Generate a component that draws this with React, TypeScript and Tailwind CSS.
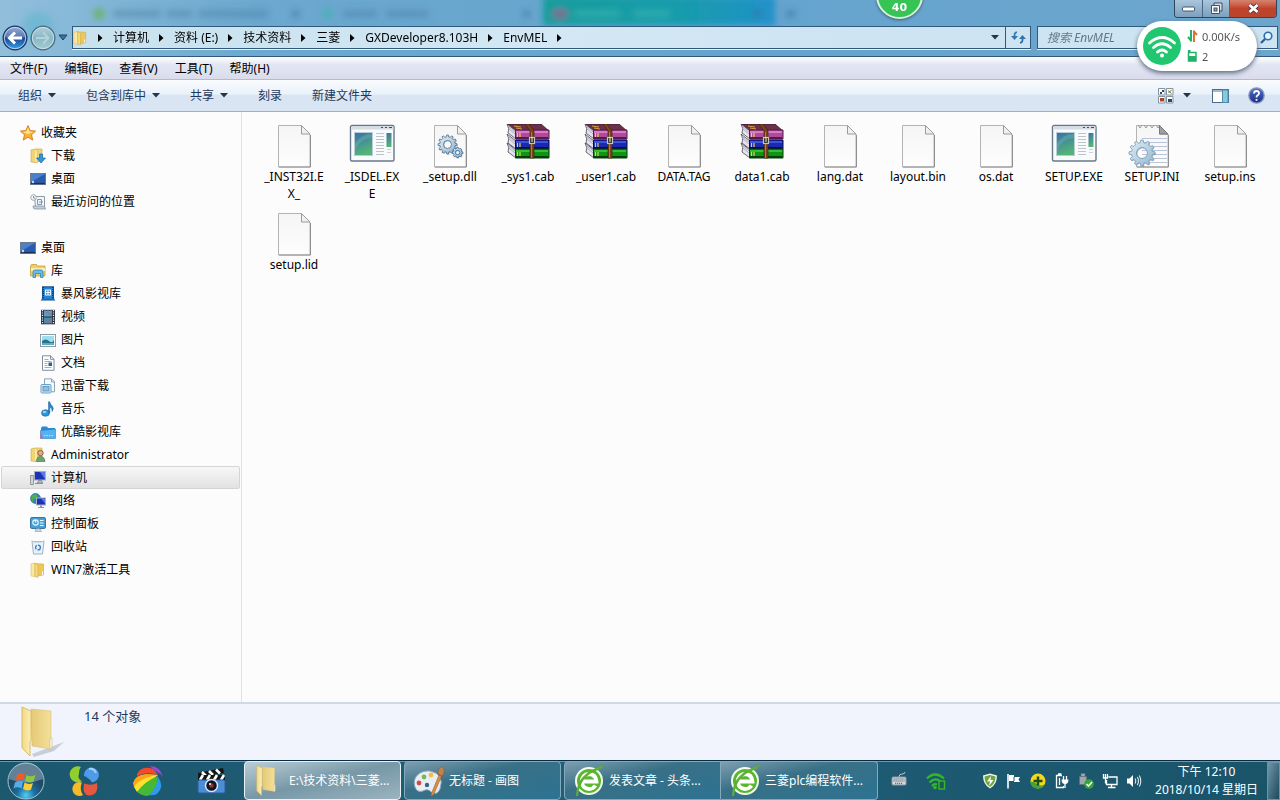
import React from 'react';

type IconProps = { className?: string };

/* ---------- large file icons (48 x 44) ---------- */

const PageShape = () => (
  <>
    <path d="M8.5 1.5h23l8.5 8.5v33H8.5z" fill="url(#pageFill)" stroke="#b4b4b4" />
    <path d="M31.5 1.5v8.5H40z" fill="#f0f0f0" stroke="#9a9a9a" />
    <path d="M9 43h31.5V11" fill="none" stroke="#8f8f8f" />
  </>
);

// Toothed outline plus the centre hole, filled with the even-odd rule
const gearPath = (cx: number, cy: number, r: number, teeth: number) => {
  const points: string[] = [];
  for (let i = 0; i < teeth; i++) {
    [[-0.3, 0.8], [-0.17, 1], [0.17, 1], [0.3, 0.8]].forEach(([offset, k]) => {
      const a = ((i + offset) / teeth) * Math.PI * 2;
      points.push(`${(cx + Math.cos(a) * r * k).toFixed(2)} ${(cy + Math.sin(a) * r * k).toFixed(2)}`);
    });
  }
  const h = r * 0.42;
  return `M${points.join('L')}ZM${cx - h} ${cy}a${h} ${h} 0 1 0 ${h * 2} 0a${h} ${h} 0 1 0 ${-h * 2} 0Z`;
};

const Gear = ({ cx, cy, r, teeth, stroke = '#5d7b95' }: { cx: number; cy: number; r: number; teeth: number; stroke?: string }) => (
  <>
    <path d={gearPath(cx + 0.8, cy + 0.8, r, teeth)} fillRule="evenodd" fill="#63717f" opacity=".5" />
    <path d={gearPath(cx, cy, r, teeth)} fillRule="evenodd" fill="url(#gearFill)" stroke={stroke} strokeWidth=".9" />
  </>
);

const BlankFile = () => (
  <svg width="48" height="44" viewBox="0 0 48 44"><PageShape /></svg>
);

const DllFile = () => (
  <svg width="48" height="44" viewBox="0 0 48 44">
    <PageShape />
    <Gear cx={21.5} cy={20.5} r={9.5} teeth={12} />
    <Gear cx={31.5} cy={28.5} r={5.2} teeth={8} stroke="#3f6c93" />
  </svg>
);

const IniFile = () => (
  <svg width="48" height="44" viewBox="0 0 48 44">
    <PageShape />
    <path d="M14 14.5h25M14 18.5h25M14 22.5h25M14 26.5h25M14 30.5h25M14 34.5h25M14 38.5h25" stroke="#b9c4d8" />
    <path d="M10 1l2 3 2-3M16 1l2 3 2-3M22 1l2 3 2-3M28 1l2 3 2-3" fill="none" stroke="#9a9a9a" />
    <path d="M31.5 1.5v8.5H40z" fill="#9aa0a8" stroke="#777" />
    <Gear cx={14} cy={29} r={13} teeth={12} stroke="#7fa0bb" />
  </svg>
);

const ExeFile = () => (
  <svg width="48" height="44" viewBox="0 0 48 44">
    <rect x="2.5" y="1.5" width="43.5" height="35.5" rx="1.5" fill="#f8fafc" stroke="#66788a" strokeWidth="1.4" />
    <path d="M3.5 2.5h42v3h-42z" fill="#d4dce5" />
    <path d="M33 3.5h2M37 3.5h2M41 3.5h3" stroke="#38506a" />
    <rect x="6.5" y="8.5" width="18" height="23" fill="url(#exeFill)" stroke="#b9ccd7" />
    <path d="M7 19q8-10 17-9v4q-11 0-17 12z" fill="#72b9c5" opacity=".35" />
    <path d="M28 9.5h8M28 12.5h8M28 15.5h8M28 18.5h8M28 21.5h8M28 24.5h8M28 27.5h8M28 30.5h8" stroke="#bcc3c9" />
    <rect x="38.5" y="9" width="5" height="14" fill="url(#exeFill)" />
    <path d="M39 25.5h4M39 28.5h4" stroke="#cdd2d6" />
  </svg>
);

const books = [
  { y: 6, spine: '#b04a9d', light: '#e48fd3', dark: '#4e1c46' },
  { y: 16, spine: '#1a28b4', light: '#4f62ea', dark: '#080c4c' },
  { y: 25, spine: '#0f9418', light: '#3fce38', dark: '#053f09' },
];

const RarFile = () => (
  <svg width="48" height="44" viewBox="0 0 48 44">
    <path d="M3 0h34l8 7H11z" fill="#6c2f4b" stroke="#3c1428" strokeWidth=".8" />
    {books.map((b) => (
      <g key={b.y}>
        <path d={`M3 ${b.y - 6}l9 7v8l-8-6q2-4-1-9z`} fill="#e4e4ee" stroke="#4a4552" strokeWidth=".8" />
        <path d={`M5 ${b.y - 3}l6 5M5 ${b.y - 1}l6 5`} stroke="#9a9aac" strokeWidth=".7" />
        <path d={`M11.5 ${b.y}H45v9H11.5z`} fill={b.spine} stroke={b.dark} />
        <path d={`M12 ${b.y + 2}h32`} stroke={b.light} strokeWidth="1.5" />
        <path d={`M12 ${b.y + 8}h32`} stroke={b.dark} strokeWidth="2" />
        <path d={`M13.5 ${b.y + 3}v4M16 ${b.y + 3}v4`} stroke="#e9d34b" strokeWidth="1.2" />
      </g>
    ))}
    <path d="M21 0h4l5 7v27h-4V7z" fill="#7a451c" stroke="#3f200a" strokeWidth=".7" />
    <path d="M27.5 8v26" stroke="#b97a3c" />
    <path d="M10 2l7 1M12 4l6 1" stroke="#d6a33e" />
    <rect x="25.5" y="13.5" width="5" height="6" fill="#2c2c22" stroke="#c4c4bc" strokeWidth="1.2" />
    <path d="M28 13v5" stroke="#f4f4e0" />
  </svg>
);

/* ---------- small icons ---------- */

const FolderIcon = ({ className = 'h-4 w-4' }: IconProps) => (
  <svg className={className} viewBox="0 0 16 16">
    <path d="M5 1.5l8.5.5v11l-6 1z" fill="#ecc75b" stroke="#c79e3b" strokeWidth=".5" />
    <path d="M1 2l4-1v13.500L1 14z" fill="#f9e9a2" stroke="#d2ae4c" strokeWidth=".5" />
    <path d="M5 1l3 2v12.500l-3-1z" fill="#f4d979" stroke="#cba746" strokeWidth=".5" />
    <path d="M12.500 9.500v3.500" stroke="#fff" />
  </svg>
);

const StarIcon = () => (
  <svg className="h-4 w-4" viewBox="0 0 16 16">
    <path d="M8 .6l2.200 5 5.400.5-4.100 3.600 1.200 5.400L8 12.200l-4.700 2.900 1.200-5.400L.4 6.100l5.400-.5z" fill="#fbb034" stroke="#d1791a" strokeWidth=".9" />
    <path d="M8 2.500l1.500 4 4 .4-5.500 2-5.500-2 4-.4z" fill="#ffe28c" />
  </svg>
);

const DownloadIcon = () => (
  <svg className="h-4 w-4" viewBox="0 0 16 16">
    <path d="M1 2l4-1h7v11l-6 2.500L1 14z" fill="#f1d575" stroke="#c9a442" strokeWidth=".6" />
    <path d="M5 1l2.500 2v12L5 14" fill="#f9e7a0" stroke="#cfae50" strokeWidth=".5" />
    <path d="M9.500 6h3v4H15.500l-4.500 5-4.500-5h3z" fill="#3297dd" stroke="#1968ab" strokeWidth=".7" />
  </svg>
);

const DesktopIcon = () => (
  <svg className="h-4 w-4" viewBox="0 0 16 16">
    <rect x=".5" y="2.500" width="15" height="11" fill="#2a5cae" stroke="#6f7c8d" />
    <path d="M1 3h14L1 11z" fill="#4c80cc" />
    <path d="M1 12.500h14" stroke="#1d3155" strokeWidth="1.300" />
    <circle cx="3" cy="11" r="1.200" fill="#bfdcf2" />
  </svg>
);

const RecentIcon = () => (
  <svg className="h-4 w-4" viewBox="0 0 16 16">
    <path d="M4.500 2.500h10v11h-9z" fill="#f3f6f9" stroke="#8d9ca8" />
    <path d="M3 12h10q2 0 2.500 3H5q-2 0-2-3z" fill="#c6ced5" stroke="#8895a0" strokeWidth=".8" />
    <path d="M7.500 5.500h4v5h-4zM9 8h4" fill="none" stroke="#7e98ad" />
    <circle cx="3.500" cy="3.500" r="2.800" fill="#f6fafc" stroke="#95a6b4" />
    <path d="M3.500 2v2h1.500" fill="none" stroke="#566" strokeWidth=".7" />
  </svg>
);

const LibraryIcon = () => (
  <svg className="h-4 w-4" viewBox="0 0 16 16">
    <path d="M.5 3l1-1.500h5l1 1.500h7.500v10H.5z" fill="#efce68" stroke="#c49f3d" strokeWidth=".8" />
    <path d="M1 5h14v3H1z" fill="#fbeeb4" />
    <path d="M3 14.500V9q0-2 2-2h6q2 0 2 2v5.500h-2.500V10.500h-5v4z" fill="#6cbbe6" stroke="#3384b5" strokeWidth=".8" />
  </svg>
);

const FilmLibraryIcon = () => (
  <svg className="h-4 w-4" viewBox="0 0 16 16">
    <path d="M1 14.500l1.500-3h11l1.500 3z" fill="#9cc4e6" stroke="#4d7fa8" strokeWidth=".6" />
    <rect x="2.500" y=".8" width="11" height="12.500" fill="#2584d8" stroke="#1b4f86" />
    <path d="M3.500 1v12M12.500 1v12" stroke="#10365e" strokeDasharray="1 1" />
    <path d="M5.500 4h5v5h-5zM8 4v5M5.500 6.500h5" fill="none" stroke="#e3f5ff" strokeWidth="1.200" />
  </svg>
);

const VideoIcon = () => (
  <svg className="h-4 w-4" viewBox="0 0 16 16">
    <rect x="1" y=".8" width="14" height="14.500" fill="#25303a" />
    <path d="M2.500 1v14M13.500 1v14" stroke="#e9eef2" strokeWidth="1.300" strokeDasharray="1.200 1.200" />
    <rect x="4" y="1.500" width="8" height="6" fill="#5d9fc1" />
    <rect x="4" y="8.500" width="8" height="6" fill="#4c8aab" />
    <path d="M4 3l8 4v-3zM4 14l8-4v3z" fill="#b25f88" opacity=".7" />
  </svg>
);

const PictureIcon = () => (
  <svg className="h-4 w-4" viewBox="0 0 16 16">
    <rect x=".5" y="2.500" width="15" height="12" fill="#fff" stroke="#8f9ca8" />
    <rect x="2" y="4" width="12" height="9" fill="#9fdcec" />
    <path d="M2 9q4-3 7 0t5-1v5H2z" fill="#28748c" />
    <path d="M2 11h12v2H2z" fill="#56b1bd" />
  </svg>
);

const DocIcon = () => (
  <svg className="h-4 w-4" viewBox="0 0 16 16">
    <path d="M2.500.8h8l3.500 3.500v11H2.500z" fill="#fff" stroke="#7f8e9c" />
    <path d="M10.500.8v3.500H14" fill="none" stroke="#7f8e9c" />
    <path d="M4.500 4.500h4M4.500 6.500h7M4.500 8.500h3M4.500 10.500h3M4.500 12.500h7" stroke="#8ea6bc" strokeWidth=".9" />
    <rect x="8.500" y="7.500" width="3.500" height="3.500" fill="#2c5f92" />
  </svg>
);

const ThunderIcon = () => (
  <svg className="h-4 w-4" viewBox="0 0 16 16">
    <path d="M4.500.8h7l3 3v10h-10z" fill="#f5fafe" stroke="#89a2b6" />
    <path d="M11.500 1v3h3" fill="none" stroke="#89a2b6" />
    <rect x="1" y="6.500" width="10" height="8.500" rx="1" fill="#d2e8f7" stroke="#6e9fc4" />
    <rect x="3" y="8.500" width="6" height="4.500" fill="#8ec0e2" stroke="#4e88b6" strokeWidth=".7" />
  </svg>
);

const MusicIcon = () => (
  <svg className="h-4 w-4" viewBox="0 0 16 16">
    <ellipse cx="5.500" cy="12" rx="4" ry="3.300" fill="#2b95d9" stroke="#1769a8" strokeWidth=".6" />
    <path d="M8.500 12V.8h1.300q.4 2.700 2.600 4.500 2 2.500-.4 5.200.6-3.500-2.200-4.300V12z" fill="#2d83c1" stroke="#1c669f" strokeWidth=".5" />
    <ellipse cx="4.500" cy="11" rx="1.800" ry="1" fill="#a5dcf7" />
  </svg>
);

const BlueFolderIcon = () => (
  <svg className="h-4 w-4" viewBox="0 0 16 16">
    <path d="M1 4l1-1.500h5L8 4h7v10H1z" fill="#2d8ad2" />
    <path d="M.5 6.500L15.500 5v9.500H.5z" fill="#55b2ef" stroke="#2a7fc2" strokeWidth=".6" />
    <path d="M4 11.500h10" stroke="#b9e1fa" strokeDasharray="1.500 1" />
    <path d="M.5 8v6.500h2.500z" fill="#e35a86" />
  </svg>
);

const UserFolderIcon = () => (
  <svg className="h-4 w-4" viewBox="0 0 16 16">
    <path d="M1 2l4-1h7v12l-6 1.500L1 14z" fill="#f1d575" stroke="#c9a442" strokeWidth=".6" />
    <path d="M5 1l2.500 2v12L5 14" fill="#f9e7a0" stroke="#cfae50" strokeWidth=".5" />
    <circle cx="10.500" cy="6" r="2.700" fill="#e3ab82" stroke="#7b4b2c" strokeWidth=".8" />
    <path d="M6.500 14.500q0-5 4-5t4.500 5z" fill="#69a36e" stroke="#42724a" strokeWidth=".6" />
  </svg>
);

const ComputerIcon = () => (
  <svg className="h-4 w-4" viewBox="0 0 16 16">
    <rect x=".7" y="5.500" width="2.600" height="9" fill="#d7dce2" stroke="#75808c" strokeWidth=".8" />
    <rect x="4.500" y="1.500" width="11" height="8.500" fill="#1b33b4" stroke="#a7b0bf" />
    <path d="M10 2h5v7z" fill="#587ae6" />
    <path d="M8.500 10.500h3l1 2.500h-5zM5 13.500h8" fill="#b6bfca" stroke="#87919e" />
  </svg>
);

const NetworkIcon = () => (
  <svg className="h-4 w-4" viewBox="0 0 16 16">
    <circle cx="5.500" cy="5.500" r="5" fill="#2a86c4" stroke="#1f5f8e" strokeWidth=".6" />
    <path d="M2 2.500q4-2.500 5 0t-2 3-2 4q-3-3-1-7z" fill="#4fb04f" />
    <rect x="6.500" y="5" width="9" height="7" fill="#1b33b4" stroke="#a7b0bf" />
    <path d="M11 5.500h4v5z" fill="#587ae6" />
    <path d="M10 12.500h2v1.500h2v1H8v-1h2z" fill="#8c97a6" />
  </svg>
);

const ControlPanelIcon = () => (
  <svg className="h-4 w-4" viewBox="0 0 16 16">
    <rect x=".6" y="1.600" width="14.800" height="10.800" rx="1" fill="#4aa3d7" stroke="#2c6d9d" />
    <circle cx="5.500" cy="6.500" r="2.700" fill="none" stroke="#e5f5ff" strokeWidth="1.200" />
    <path d="M5.500 6.500v-2.500M10 4.500h3.500M10 7h3.500M10 9.500h3.500" stroke="#eaf8ff" strokeWidth="1.200" />
    <path d="M5 15.500q0-3 3-3t3.500 3z" fill="#cfd8e0" stroke="#8f9ba6" strokeWidth=".6" />
  </svg>
);

const RecycleIcon = () => (
  <svg className="h-4 w-4" viewBox="0 0 16 16">
    <path d="M2 2.500h12l-1.500 12.500h-9z" fill="#e9f1f8" stroke="#9fb1c1" />
    <path d="M1.500 1.500L4 3h8l2.500-1.500" fill="none" stroke="#bccad6" />
    <circle cx="8" cy="8.500" r="2.400" fill="none" stroke="#3b7fca" strokeWidth="1.400" strokeDasharray="4 1" />
  </svg>
);

const Caret = () => (
  <svg width="8" height="5" viewBox="0 0 8 5"><path d="M0 0h8L4 4.500z" fill="#22344e" /></svg>
);

/* ---------- navigation ---------- */

type NavItem = { label: string; icon: React.ReactNode; indent: string; active?: boolean };

const favorites: NavItem[] = [
  { label: '收藏夹', icon: <StarIcon />, indent: 'pl-[18px]' },
  { label: '下载', icon: <DownloadIcon />, indent: 'pl-[28px]' },
  { label: '桌面', icon: <DesktopIcon />, indent: 'pl-[28px]' },
  { label: '最近访问的位置', icon: <RecentIcon />, indent: 'pl-[28px]' },
];

const places: NavItem[] = [
  { label: '桌面', icon: <DesktopIcon />, indent: 'pl-[18px]' },
  { label: '库', icon: <LibraryIcon />, indent: 'pl-[28px]' },
  { label: '暴风影视库', icon: <FilmLibraryIcon />, indent: 'pl-[38px]' },
  { label: '视频', icon: <VideoIcon />, indent: 'pl-[38px]' },
  { label: '图片', icon: <PictureIcon />, indent: 'pl-[38px]' },
  { label: '文档', icon: <DocIcon />, indent: 'pl-[38px]' },
  { label: '迅雷下载', icon: <ThunderIcon />, indent: 'pl-[38px]' },
  { label: '音乐', icon: <MusicIcon />, indent: 'pl-[38px]' },
  { label: '优酷影视库', icon: <BlueFolderIcon />, indent: 'pl-[38px]' },
  { label: 'Administrator', icon: <UserFolderIcon />, indent: 'pl-[28px]' },
  { label: '计算机', icon: <ComputerIcon />, indent: 'pl-[28px]', active: true },
  { label: '网络', icon: <NetworkIcon />, indent: 'pl-[28px]' },
  { label: '控制面板', icon: <ControlPanelIcon />, indent: 'pl-[28px]' },
  { label: '回收站', icon: <RecycleIcon />, indent: 'pl-[28px]' },
  { label: 'WIN7激活工具', icon: <FolderIcon />, indent: 'pl-[28px]' },
];

const NavList = ({ items }: { items: NavItem[] }) => (
  <ul>
    {items.map((item) => (
      <li key={item.label}>
        <button
          className={`flex h-[23px] w-full items-center gap-[5px] rounded-xs border ${item.indent} ${
            item.active ? 'border-[#d5d5d5] bg-linear-to-b from-[#f7f7f7] to-[#e2e2e2]' : 'border-transparent'
          }`}
        >
          {item.icon}
          <span>{item.label}</span>
        </button>
      </li>
    ))}
  </ul>
);

const files = [
  { name: '_INST32I.E\nX_', icon: <BlankFile /> },
  { name: '_ISDEL.EX\nE', icon: <ExeFile /> },
  { name: '_setup.dll', icon: <DllFile /> },
  { name: '_sys1.cab', icon: <RarFile /> },
  { name: '_user1.cab', icon: <RarFile /> },
  { name: 'DATA.TAG', icon: <BlankFile /> },
  { name: 'data1.cab', icon: <RarFile /> },
  { name: 'lang.dat', icon: <BlankFile /> },
  { name: 'layout.bin', icon: <BlankFile /> },
  { name: 'os.dat', icon: <BlankFile /> },
  { name: 'SETUP.EXE', icon: <ExeFile /> },
  { name: 'SETUP.INI', icon: <IniFile /> },
  { name: 'setup.ins', icon: <BlankFile /> },
  { name: 'setup.lid', icon: <BlankFile /> },
];

/* ---------- window chrome ---------- */

const crumbs = ['计算机', '资料 (E:)', '技术资料', '三菱', 'GXDeveloper8.103H', 'EnvMEL'];

const CrumbArrow = () => (
  <span className="flex w-[25px] justify-center">
    <svg width="5" height="8" viewBox="0 0 5 8"><path d="M0 0l4.500 4L0 8z" fill="#000" /></svg>
  </span>
);

// Browser tabs showing through the glass frame
const GlassBackdrop = () => (
  <svg className="absolute inset-0 h-full w-full" preserveAspectRatio="none" viewBox="0 0 1280 57">
    <rect width="1280" height="57" fill="url(#glass)" />
    <g filter="url(#soft)">
      <circle cx="38" cy="28" r="16" fill="#62b6cf" opacity=".6" />
      <rect x="543" y="-4" width="232" height="30" fill="url(#tab)" />
      <ellipse cx="99" cy="14" rx="6" ry="6" fill="#6fb077" />
      <ellipse cx="328" cy="14" rx="6" ry="6" fill="#4faebb" />
      <ellipse cx="560" cy="14" rx="8" ry="5" fill="#7d6b91" />
      <path d="M113 14h48M166 14h26M198 14h70" stroke="#44799f" strokeWidth="8" opacity=".4" />
      <path d="M343 14h34M386 14h42" stroke="#44799f" strokeWidth="8" opacity=".4" />
      <path d="M574 14h46M634 14h36" stroke="#4cc0ba" strokeWidth="8" opacity=".4" />
      <path d="M292 14h7M523 14h7M754 14h7M786 14h9" stroke="#336890" strokeWidth="7" opacity=".5" />
    </g>
  </svg>
);

const TitleBar = () => (
  <header className="relative h-[57px] border-b border-[#31597b]">
    <GlassBackdrop />
    <div className="relative flex h-[26px] items-start justify-end pr-[3px]">
      <div className="flex h-[18px] overflow-hidden rounded-b border border-t-0 border-[#31445c]">
        <button aria-label="最小化" className="flex w-[28px] items-center justify-center border-r border-[#4b6680] bg-linear-to-b from-[#a9c6dc] to-[#7ba0be]">
          <svg width="13" height="6" viewBox="0 0 13 6"><rect x=".5" y="1" width="12" height="4" rx="1" fill="#fff" stroke="#46566a" /></svg>
        </button>
        <button aria-label="还原" className="flex w-[27px] items-center justify-center border-r border-[#4b6680] bg-linear-to-b from-[#a9c6dc] to-[#7ba0be]">
          <svg width="13" height="13" viewBox="0 0 13 13">
            <path d="M4 1h8v8h-8z" fill="#d5e0ea" stroke="#404d63" />
            <path d="M1.500 3.500h8v8h-8z" fill="#fff" stroke="#404d63" />
            <rect x="4" y="6" width="3" height="3" fill="#8fa9bf" stroke="#404d63" />
          </svg>
        </button>
        <button aria-label="关闭" className="flex w-[46px] items-center justify-center bg-linear-to-b from-[#d4836f] via-[#c2422a] to-[#b8452c]">
          <svg width="13" height="11" viewBox="0 0 13 11">
            <path d="M2.500 2l8 7M10.500 2l-8 7" stroke="#5c3540" strokeWidth="4.500" />
            <path d="M2.500 2l8 7M10.500 2l-8 7" stroke="#fff" strokeWidth="2.800" />
          </svg>
        </button>
      </div>
    </div>
    <div className="relative flex h-[23px] items-center pr-[2px] pl-[2px]">
      <button aria-label="后退">
        <svg width="26" height="26" viewBox="0 0 26 26">
          <circle cx="13" cy="13" r="11.800" fill="url(#back)" stroke="#1e3a6c" strokeWidth="1.400" />
          <circle cx="13" cy="13" r="10.700" fill="none" stroke="#d7e8f8" strokeWidth=".8" />
          <path d="M2.500 12A10.500 10 0 0 1 23.500 12Q13 15 2.500 12z" fill="#fff" opacity=".25" />
          <path d="M20 13H8.500M13 7.500L7.500 13l5.500 5.500" fill="none" stroke="#fff" strokeWidth="3" />
        </svg>
      </button>
      <button aria-label="前进" className="ml-0.5">
        <svg width="26" height="26" viewBox="0 0 26 26">
          <circle cx="13" cy="13" r="11.800" fill="url(#fwd)" stroke="#4c7086" strokeWidth="1.400" />
          <circle cx="13" cy="13" r="10.700" fill="none" stroke="#d5e9ee" strokeWidth=".8" />
          <path d="M6 13h11.500M13 7.500l5.500 5.500-5.500 5.500" fill="none" stroke="#b4d3da" strokeWidth="2" />
        </svg>
      </button>
      <button aria-label="最近页面" className="ml-px flex w-[12px] justify-center">
        <svg width="10" height="7" viewBox="0 0 10 7"><path d="M1 1h8L5 6z" fill="#3b73a0" stroke="#1f4466" /></svg>
      </button>
      <div className="ml-[3px] flex h-[23px] min-w-0 flex-1 items-center border border-[#31597b] bg-linear-to-r from-[#c8e2ee] via-[#d3e7f4] to-[#cde3f2] shadow-[0_1px_0_#e4f3fa]">
        <nav className="flex min-w-0 flex-1 items-center">
          <FolderIcon className="h-4 w-[15px]" />
          <CrumbArrow />
          {crumbs.map((c) => (
            <React.Fragment key={c}>
              <button className="whitespace-nowrap">{c}</button>
              <CrumbArrow />
            </React.Fragment>
          ))}
        </nav>
        <button aria-label="以前的位置" className="flex h-full w-[20px] items-center justify-center"><Caret /></button>
        <button aria-label="刷新" className="flex h-full w-[25px] items-center justify-center border-l border-[#31597b]">
          <svg width="15" height="15" viewBox="0 0 15 15">
            <path d="M6 2.500Q3.500 2 3.500 5.500V7" fill="none" stroke="#3679b4" strokeWidth="1.800" />
            <path d="M0 6h7L3.500 10z" fill="#2f76b5" />
            <path d="M9 12.500q2.500.5 2.500-3V8" fill="none" stroke="#2b6aa5" strokeWidth="1.800" />
            <path d="M8 9h7l-3.500-4z" fill="#2f76b5" />
          </svg>
        </button>
      </div>
      <form className="ml-[6px] flex h-[23px] w-[241px] items-center border border-[#31597b] bg-[#cde4f2] pr-[4px] pl-[9px] shadow-[0_1px_0_#e4f3fa]">
        <input aria-label="搜索" placeholder="搜索 EnvMEL" className="min-w-0 flex-1 bg-transparent italic outline-none placeholder:text-[#667785]" />
        <svg width="13" height="13" viewBox="0 0 13 13">
          <circle cx="8" cy="5" r="3.800" fill="#e6f4fd" stroke="#2d6fae" strokeWidth="1.600" />
          <path d="M5 8l-4 4" stroke="#2c5f97" strokeWidth="2.300" />
        </svg>
      </form>
    </div>
  </header>
);

const SpeedBadge = () => (
  <div className="absolute -top-[28px] left-[876px] flex h-[47px] w-[47px] items-end justify-center rounded-full border-2 border-[#d7f3dc] bg-[#36c455] pb-px font-['DejaVu_Sans'] text-[11px] leading-4 font-bold text-white shadow-[0_1px_3px_#3c5d75]">
    40
  </div>
);

const WifiWidget = () => (
  <div className="absolute top-[21px] right-[23px] flex h-[50px] w-[120px] items-center gap-[6px] rounded-full bg-white pl-[6px] text-[11px] text-[#555] shadow-[0_2px_5px_#56657a]">
    <svg width="38" height="38" viewBox="0 0 38 38">
      <circle cx="19" cy="19" r="19" fill="#21c770" />
      <g fill="none" stroke="#fff" strokeWidth="2.800" strokeLinecap="round">
        <path d="M6.500 16q12.500-11 25 0M10.500 20.500q8.500-7.500 17 0M14.500 25q4.500-4 9 0" />
      </g>
      <circle cx="19" cy="28.500" r="2" fill="#fff" />
    </svg>
    <div className="flex flex-col gap-1">
      <div className="flex h-4 items-center gap-[4px]">
        <svg width="11" height="12" viewBox="0 0 11 12">
          <path d="M4 0v11.500M4.500 11L1 7" stroke="#23b267" strokeWidth="2" fill="none" />
          <path d="M7 12V.5M6.500 1L10 5" stroke="#dc7430" strokeWidth="2" fill="none" />
        </svg>
        0.00K/s
      </div>
      <div className="flex h-4 items-center gap-[4px]">
        <svg width="11" height="12" viewBox="0 0 11 12">
          <path d="M1.500 2.500h7.500V11H1.500z" fill="#fff" stroke="#23b267" strokeWidth="1.500" />
          <path d="M1 6h8v5H1zM1 0h2.500v3H1z" fill="#23b267" />
        </svg>
        2
      </div>
    </div>
  </div>
);

const MenuBar = () => (
  <nav className="flex h-[23px] items-center border-b border-[#b4bbd2] bg-linear-to-b from-white via-[#e2e6f3] via-35% to-[#dadcec] pl-[2px]">
    {['文件(F)', '编辑(E)', '查看(V)', '工具(T)', '帮助(H)'].map((m) => (
      <button key={m} className="pr-[9px] pl-2">{m}</button>
    ))}
  </nav>
);

const commands = [
  { label: '组织', menu: true },
  { label: '包含到库中', menu: true },
  { label: '共享', menu: true },
  { label: '刻录', menu: false },
  { label: '新建文件夹', menu: false },
];

const CommandBar = () => (
  <div className="flex h-[32px] items-center border-b border-[#9fb1c7] bg-linear-to-b from-[#fafcfe] from-0% via-[#e9f1fa] via-45% to-[#d9e5f3] to-50% pr-[15px] pl-[18px] text-[#1e395b]">
    <div className="flex flex-1 gap-[30px]">
      {commands.map((c) => (
        <button key={c.label} className="flex items-center gap-[6px]">
          {c.label}
          {c.menu && <Caret />}
        </button>
      ))}
    </div>
    <button aria-label="视图">
      <svg width="16" height="16" viewBox="0 0 16 16">
        <path d="M.5.5h6.500v6.500H.5zM8.500.5h6.500v6.500H8.500zM.5 8.500h6.500v6.500H.5zM8.500 8.500h6.500v6.500H8.500z" fill="#fff" stroke="#8492a2" />
        <path d="M2 4h2v2H2zM4 2h2v2H4z" fill="#2b4d70" />
        <path d="M10 2.500l3.500 3M10.500 5l3-3" stroke="#6c7434" />
        <path d="M2 10h4v3.500H2z" fill="#a64523" />
        <path d="M10 11h4v3h-4z" fill="#28466e" />
      </svg>
    </button>
    <button aria-label="更多视图" className="ml-[9px]"><Caret /></button>
    <button aria-label="预览窗格" className="ml-[21px]">
      <svg width="17" height="14" viewBox="0 0 17 14">
        <rect x=".5" y=".5" width="16" height="13" fill="#fff" stroke="#496a8c" />
        <path d="M1 2h15" stroke="#a2bbd3" strokeWidth="2" />
        <rect x="10.500" y="1" width="5.500" height="12.500" fill="#8cc8dc" stroke="#4b8faa" />
      </svg>
    </button>
    <button aria-label="帮助" className="ml-[19px]">
      <svg width="17" height="17" viewBox="0 0 17 17">
        <circle cx="8.500" cy="8.500" r="7.700" fill="url(#help)" stroke="#8d9ac0" strokeWidth="1.300" />
        <path d="M6 6.500Q6 4 8.500 4T11 6.300q0 1.200-1.300 2T8.500 10.500M8.500 12v1.800" fill="none" stroke="#fff" strokeWidth="1.800" />
      </svg>
    </button>
  </div>
);

const LargeFolder = ({ className }: IconProps) => (
  <svg className={className} viewBox="0 0 44 52">
    <path d="M12 48l32-12-10 9-20 6z" fill="#8c95a3" opacity=".4" />
    <path d="M11 3l20 2v38l-19-3z" fill="url(#folderBack)" stroke="#d9c17a" strokeWidth=".6" />
    <path d="M2 1l9 4v29l-1 2v14l-8-8z" fill="url(#folderFront)" stroke="#d1b254" strokeWidth=".8" />
    <path d="M30 32h2v9l-2 3z" fill="#fffdf2" stroke="#ccb469" strokeWidth=".6" />
  </svg>
);

/* ---------- taskbar ---------- */

const StartOrb = () => (
  <svg width="38" height="38" viewBox="0 0 38 38">
    <circle cx="19" cy="19" r="18" fill="url(#orb)" stroke="#9ec9dc" strokeWidth="1" />
    <path d="M2 17a17 16 0 0 1 34 0q-17 7-34 0z" fill="#fff" opacity=".3" />
    <path d="M10 13q4-3 8-.5l-1.500 6q-4-2-8 .5z" fill="#ef5b2b" />
    <path d="M19.500 13q4 2.500 9 0l-2 6.500q-4 2-8.500-.5z" fill="#8fc73f" />
    <path d="M8 20.500q4-2.500 8-.5l-1.500 6.500q-4-2.500-8 0z" fill="#52ade9" />
    <path d="M17.500 20.500q4 2.500 8.500.5l-2 6.500q-4 2-8-.5z" fill="#fccb3a" />
  </svg>
);

const PetalsIcon = () => (
  <svg width="32" height="32" viewBox="0 0 32 32">
    <path d="M13 2A8 8 0 1 0 14 16 5 5 0 0 1 11 9Q11 4 13 2z" fill="#90cf2e" />
    <path d="M16 11a7.500 7.500 0 1 1 8 6.500q-3-5-8-6.500z" fill="#4d9be9" />
    <path d="M14 17.500a7 7 0 1 0 1 12.500q-4-6-1-12.500z" fill="#f5ba26" />
    <path d="M16 18.500q7 2.500 13-.5 2 12-8 12.500-7-.5-5-12z" fill="#e65840" />
    <path d="M21 4q5-1 7 4" stroke="#a5d0fa" strokeWidth="2" fill="none" />
  </svg>
);

const PinwheelIcon = () => (
  <svg width="34" height="34" viewBox="0 0 34 34">
    <path d="M19 2q10 0 13 11-3-4-8-6z" fill="#a044d4" />
    <path d="M6 10Q11 1 22 5l5 6Q16 7 6 12z" fill="#f5492c" />
    <path d="M2 19q2-8 13-9 7 0 12 1L3 23z" fill="#ffa417" />
    <path d="M3 23q5-9 24-12L6 28z" fill="#ffdf2d" />
    <path d="M6 28q8-11 21-16 0 14-10 20-6 0-11-4z" fill="#47b833" />
    <path d="M27 13q7 9-1 17-4 2-8 1 8-7 9-18z" fill="#2d9aee" />
  </svg>
);

const ClapperIcon = () => (
  <svg width="30" height="28" viewBox="0 0 30 28">
    <path d="M1 6L26 1l1 5L2 11z" fill="#151515" />
    <path d="M5 5l4 4M12 4l4 4M19 2.500l4 4" stroke="#fff" strokeWidth="2.600" />
    <rect x="1" y="8" width="27" height="5" fill="#151515" />
    <path d="M6 8l-3 5M13 8l-3 5M20 8l-3 5M27 8l-3 5" stroke="#fff" strokeWidth="2.600" />
    <rect x="1" y="13" width="27" height="13" rx="1.500" fill="#4b8ed7" stroke="#2a5e9b" />
    <circle cx="14.500" cy="18.500" r="6" fill="#101722" stroke="#d8e8f6" strokeWidth="1.500" />
    <circle cx="14.500" cy="18.500" r="2.200" fill="#9c2f2d" />
    <circle cx="13" cy="17" r="1" fill="#fff" />
  </svg>
);

const PaintIcon = () => (
  <svg width="32" height="32" viewBox="0 0 32 32">
    <path d="M17 6C5 5-1 14 2 22q2 6 8 4 5-3 8 1 6 4 9-3Q32 9 17 6z" fill="#e8eef4" stroke="#8ea4b7" />
    <circle cx="6" cy="18" r="2.400" fill="#d8474e" />
    <circle cx="11" cy="12" r="2.400" fill="#78b94c" />
    <circle cx="18" cy="10" r="2.400" fill="#efc13f" />
    <circle cx="14" cy="20" r="2.200" fill="#356487" />
    <path d="M26 10l2.500 1-8 19-3 1z" fill="#d99246" stroke="#915923" strokeWidth=".6" />
    <path d="M25 9q-1-5 4-8l2 3q1 5-2.500 7z" fill="#bf8350" stroke="#8c5630" strokeWidth=".6" />
  </svg>
);

const BrowserIcon = () => (
  <svg width="32" height="32" viewBox="0 0 32 32">
    <circle cx="16" cy="16" r="13" fill="#58b82c" stroke="#f2fbee" strokeWidth="2" />
    <path d="M22.500 20.500Q20 24 16 24q-7-.5-7-7.500T16 9q7 .5 7.500 7.500H11" fill="none" stroke="#fff" strokeWidth="3.800" />
    <path d="M3 31Q3 8 31 0q-2 4-6 5Q7 11 5 31z" fill="#5fae38" />
  </svg>
);

const TaskButton = ({ icon, label, active, className = '' }: { icon: React.ReactNode; label: string; active?: boolean; className?: string }) => (
  <button
    className={`flex h-[39px] w-[157px] min-w-0 items-center gap-[4px] border pl-[8px] text-left text-white ${
      active
        ? 'border-[#e8f2f6] bg-linear-to-br from-[#b9cdd7] via-[#7798a7] to-[#9bb3bf]'
        : 'border-[#83aabc] bg-linear-to-br from-[#7e9eb0] via-[#387086] via-40% to-[#2c7392]'
    } ${className}`}
  >
    <span className="flex w-[32px] shrink-0 justify-center">{icon}</span>
    <span className="truncate">{label}</span>
  </button>
);

const trayIcons = [
  {
    name: '安全卫士',
    art: (
      <>
        <path d="M8 .5l7 2q0 9-7 13-7-4-7-13z" fill="#f5f7e6" />
        <path d="M8 2l5.500 1.500q0 7-5.500 10.500-5.500-3.500-5.500-10.500z" fill="#6ba640" />
        <path d="M9 3L5 8.500h3L7 13l4.500-6H8.500z" fill="#fff" />
      </>
    ),
  },
  {
    name: '操作中心',
    art: (
      <>
        <path d="M2 1v14.500" stroke="#fff" strokeWidth="1.600" />
        <path d="M3 2h5v2h6l-1.500 2.500L14 9H8V8H3z" fill="#fff" />
        <path d="M8 4v4" stroke="#1d5870" />
      </>
    ),
  },
  {
    name: '360',
    art: (
      <>
        <circle cx="8" cy="8" r="7.500" fill="#f7d61e" />
        <path d="M0 9a8 8 0 0 0 15 2q-4 3-8 0t-7-2z" fill="#45a236" />
        <path d="M8 3.500v9M3.500 8h9" stroke="#174f1f" strokeWidth="2.400" />
      </>
    ),
  },
  {
    name: '电源',
    art: (
      <>
        <path d="M8 2.500H2.500v12h7V13M4 1h3.500" fill="none" stroke="#fff" strokeWidth="1.300" />
        <path d="M5.500 5v7" stroke="#fff" strokeWidth="1.300" />
        <path d="M9.500 3v4M12.500 3v4M11 10v5" stroke="#fff" strokeWidth="1.300" />
        <path d="M7.500 6.500h7q0 4.500-3.500 4.500T7.500 6.500z" fill="#fff" />
      </>
    ),
  },
  {
    name: '安全删除硬件',
    art: (
      <>
        <path d="M3 .5h4v3H3zM1.500 3.500h7v8h-7z" fill="#a2a7ae" stroke="#646c75" strokeWidth=".6" />
        <circle cx="11" cy="11" r="4.800" fill="#35a63b" />
        <path d="M8.500 11l2 2 3.500-4" fill="none" stroke="#fff" strokeWidth="1.500" />
      </>
    ),
  },
  {
    name: '网络连接',
    art: (
      <g fill="none" stroke="#fff" strokeWidth="1.300">
        <path d="M1.500 1v4h4V1M3.500 1v9.500M6.500 4h8.500v7.500H4.500V7M9.500 12v2.500M6 14.500h7.500" />
      </g>
    ),
  },
  {
    name: '音量',
    art: (
      <>
        <path d="M1 5.500h2.500L7 2v12l-3.500-3.500H1z" fill="#fff" />
        <path d="M9 5.500q1.500 2.500 0 5M11.300 4q2.400 4 0 8M13.300 2.500q3 5.500 0 11" fill="none" stroke="#dce9ee" strokeWidth="1.100" />
      </>
    ),
  },
];

const Taskbar = () => (
  <footer className="flex h-[40px] items-center border-t border-[#082c42] bg-linear-to-r from-[#1c586e] via-[#205f79] to-[#195469] shadow-[inset_0_1px_0_#6c9bad]">
    <button aria-label="开始" className="flex w-[52px] justify-center"><StartOrb /></button>
    <button aria-label="软件管家" className="flex w-[64px] justify-center"><PetalsIcon /></button>
    <button aria-label="影音" className="flex w-[64px] justify-center"><PinwheelIcon /></button>
    <button aria-label="视频编辑" className="flex w-[64px] justify-center"><ClapperIcon /></button>
    <div className="flex min-w-0 gap-[3px]">
      <TaskButton icon={<LargeFolder className="h-[32px] w-[28px]" />} label="E:\技术资料\三菱..." active className="rounded-sm" />
      <TaskButton icon={<PaintIcon />} label="无标题 - 画图" className="rounded-sm" />
      <div className="flex min-w-0">
        <TaskButton icon={<BrowserIcon />} label="发表文章 - 头条..." className="rounded-l-sm" />
        <TaskButton icon={<BrowserIcon />} label="三菱plc编程软件..." className="rounded-r-sm border-l-0" />
      </div>
    </div>
    <div className="ml-[13px] flex gap-[18px]">
      <button aria-label="输入法">
        <svg width="17" height="17" viewBox="0 0 17 17">
          <path d="M8 5q0-3 3-3t3-2" fill="none" stroke="#b9c4ca" />
          <rect x="1" y="5" width="14" height="8" rx="1" fill="#d4dadd" stroke="#87949c" />
          <path d="M2.500 7h11M2.500 9h11M4 11.300h8" stroke="#4b5a63" strokeDasharray="1.200 .8" />
        </svg>
      </button>
      <button aria-label="随身WiFi">
        <svg width="20" height="18" viewBox="0 0 20 18">
          <g fill="none" stroke="#35b729" strokeWidth="2.200">
            <path d="M1 6.500q8-8 17 0M3.500 10.500q5.500-5.500 11-1M6 14q2-2.500 5-1.500" />
          </g>
          <circle cx="9" cy="15.500" r="1.800" fill="#35b729" />
          <rect x="13" y="9" width="5.500" height="8" fill="#1b5a55" stroke="#35b729" strokeWidth="1.400" />
        </svg>
      </button>
    </div>
    <div className="ml-auto flex">
      {trayIcons.map((t) => (
        <button key={t.name} aria-label={t.name} className="flex w-6 justify-center">
          <svg width="16" height="16" viewBox="0 0 16 16">{t.art}</svg>
        </button>
      ))}
    </div>
    <button className="w-[121px] shrink-0 text-center leading-[18px] whitespace-nowrap text-white">
      下午 12:10
      <br />
      2018/10/14 星期日
    </button>
    <button aria-label="显示桌面" className="h-[38px] w-[13px] shrink-0 border border-[#6c94a6] bg-linear-to-br from-[#6e97aa] to-[#1c4a5c]" />
  </footer>
);

const Gradients = () => (
  <svg className="absolute h-0 w-0" aria-hidden="true">
    <defs>
      <linearGradient id="pageFill" x1="0" y1="0" x2="0" y2="1"><stop stopColor="#f5f5f5" /><stop offset="1" stopColor="#fdfdfd" /></linearGradient>
      <linearGradient id="exeFill" x1="0" y1="0" x2="0.300" y2="1"><stop stopColor="#3a70a8" /><stop offset="1" stopColor="#54b478" /></linearGradient>
      <linearGradient id="gearFill" x1="0" y1="0" x2="1" y2="1"><stop stopColor="#e3eff7" /><stop offset="1" stopColor="#8fb6d2" /></linearGradient>
      <linearGradient id="glass" x1="0" y1="0" x2="1" y2="0"><stop stopColor="#91bfdb" /><stop offset=".2" stopColor="#6ca8cf" /><stop offset=".6" stopColor="#65a4ce" /><stop offset="1" stopColor="#6da6cd" /></linearGradient>
      <linearGradient id="tab" x1="0" y1="0" x2="1" y2="0"><stop stopColor="#159c9c" /><stop offset=".6" stopColor="#189cac" /><stop offset="1" stopColor="#2291ca" /></linearGradient>
      <linearGradient id="back" x1="0" y1="0" x2="0" y2="1"><stop stopColor="#7394c8" /><stop offset=".5" stopColor="#1c4796" /><stop offset="1" stopColor="#35a5ea" /></linearGradient>
      <linearGradient id="fwd" x1="0" y1="0" x2="0" y2="1"><stop stopColor="#b2d0da" /><stop offset=".5" stopColor="#8ab6c4" /><stop offset="1" stopColor="#a5ccd4" /></linearGradient>
      <linearGradient id="help" x1="0" y1="0" x2="0" y2="1"><stop stopColor="#5671c9" /><stop offset="1" stopColor="#172c84" /></linearGradient>
      <linearGradient id="folderBack"><stop stopColor="#e5c975" /><stop offset="1" stopColor="#f3e09a" /></linearGradient>
      <linearGradient id="folderFront"><stop stopColor="#f1d985" /><stop offset="1" stopColor="#fbeeb8" /></linearGradient>
      <radialGradient id="orb" cx=".5" cy=".9"><stop stopColor="#4dd1f6" /><stop offset=".5" stopColor="#1d6c9e" /><stop offset="1" stopColor="#204b66" /></radialGradient>
      <filter id="soft"><feGaussianBlur stdDeviation="3" /></filter>
    </defs>
  </svg>
);

export default function App() {
  return (
    <div className="relative flex min-h-screen flex-col overflow-hidden bg-[#fcfcfc] font-['Noto_Sans','Noto_Sans_CJK_SC',sans-serif] text-[12px] leading-[17px] text-black">
      <Gradients />
      <TitleBar />
      <MenuBar />
      <CommandBar />
      <div className="flex flex-1">
        <aside className="flex w-[242px] shrink-0 flex-col gap-[23px] border-r border-[#d4e4f2] py-[9px] pr-px pl-px">
          <NavList items={favorites} />
          <NavList items={places} />
        </aside>
        <main className="flex flex-1 flex-wrap content-start gap-y-2 pt-[10px] pr-[11px] pl-[13px]">
          {files.map((f) => (
            <button key={f.name} className="flex w-[78px] flex-col items-center">
              <span className="flex h-[46px] items-end">{f.icon}</span>
              <span className="whitespace-pre-line">{f.name}</span>
            </button>
          ))}
        </main>
      </div>
      <section className="flex h-[58px] items-start border-t-2 border-[#ced9e5] bg-[#f1f4fc] pl-[20px] text-[13px] text-[#1e395b]">
        <LargeFolder className="mt-[2px] h-[52px] w-[44px]" />
        <p className="mt-1 ml-[20px]">14 个对象</p>
      </section>
      <Taskbar />
      <SpeedBadge />
      <WifiWidget />
    </div>
  );
}
